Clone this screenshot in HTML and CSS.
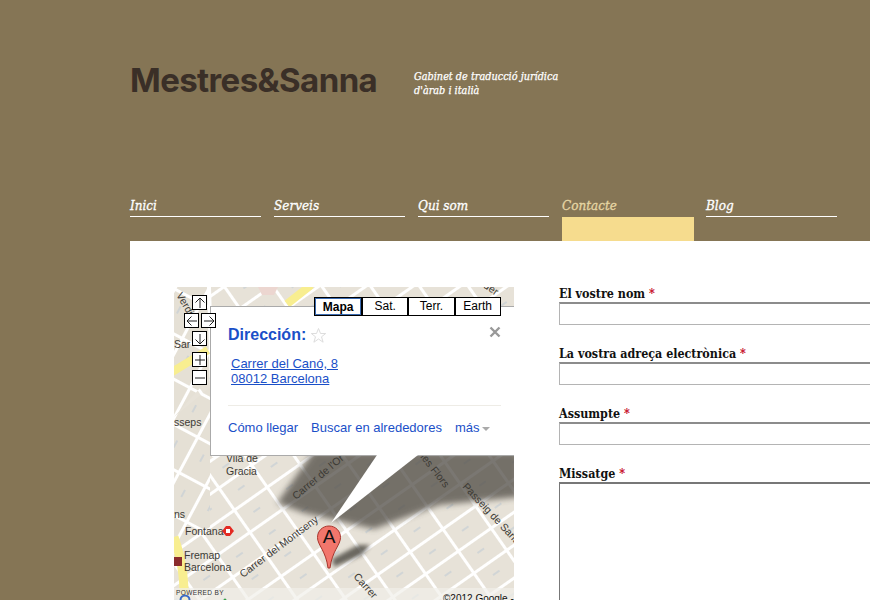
FILE: index.html
```html
<!DOCTYPE html>
<html lang="ca">
<head>
<meta charset="utf-8">
<title>Mestres&amp;Sanna</title>
<link rel="stylesheet" href="styles.css">
</head>
<body>
<header class="site-header">
  <h1 class="logo">Mestres&amp;Sanna</h1>
  <p class="tagline">Gabinet de traducció jurídica<br>d'àrab i italià</p>
</header>
<nav class="nav">
  <a class="nav-item" href="#">Inici</a>
  <a class="nav-item" href="#">Serveis</a>
  <a class="nav-item" href="#">Qui som</a>
  <a class="nav-item active" href="#">Contacte</a>
  <a class="nav-item" href="#">Blog</a>
</nav>
<main class="panel">
  <div class="map">
    <svg class="map-bg" width="340" height="320" viewBox="0 0 340 320">
      <defs>
        <pattern id="blocksA" width="40" height="27" patternUnits="userSpaceOnUse" patternTransform="rotate(-35)">
          <rect width="40" height="27" fill="#e7e2d8"/>
          <path d="M0 1.500H40M1.500 0V27" stroke="#fff" stroke-width="3"/>
          <path d="M16 14h8" stroke="#c3cdd6" stroke-width="1.200"/>
        </pattern>
        <pattern id="blocksB" width="30" height="40" patternUnits="userSpaceOnUse" patternTransform="rotate(28)">
          <rect width="30" height="40" fill="#e5e0d5"/>
          <path d="M0 1.500H30M1.500 0V40" stroke="#fff" stroke-width="3"/>
          <path d="M15 14v8" stroke="#c3cdd6" stroke-width="1.200"/>
        </pattern>
        <filter id="blur6" x="-20%" y="-20%" width="140%" height="140%"><feGaussianBlur stdDeviation="3"/></filter>
        <filter id="blur3" x="-20%" y="-20%" width="140%" height="140%"><feGaussianBlur stdDeviation="2"/></filter>
      </defs>
      <rect width="340" height="320" fill="url(#blocksA)"/>
      <path d="M0 0H36V90L0 130Z M0 130L36 100V240L0 260Z" fill="url(#blocksB)"/>
      <path d="M35 0L40 170" stroke="#fff" stroke-width="4" fill="none"/>
      <path d="M84 0H104L100 8H88Z" fill="#ecd6d0"/>
      <path d="M-2 85L34 63" stroke="#f8ee90" stroke-width="8" fill="none"/>
      <path d="M113 17L137 -2" stroke="#f8ee90" stroke-width="8" fill="none"/>
      <path d="M0 250C6 268 11 285 10 320" stroke="#f8ee90" stroke-width="9" fill="none"/>
      <rect x="0" y="270" width="8" height="9" fill="#8a2c2c"/>
      <path d="M103 216L139 165H345V210L265 218L200 242L130 226Z" fill="#4e4a42" opacity=".74" filter="url(#blur6)"/>
      <path d="M158 272L184 258H196L188 268L160 280Z" fill="#4a4740" opacity=".8" filter="url(#blur3)"/>
      <rect y="301" width="340" height="19" fill="#f1efe9" opacity=".7"/>
      <g class="map-label">
        <text x="52" y="175">Vila de</text>
        <text x="52" y="188">Gracia</text>
        <text x="0" y="139">sseps</text>
        <text x="11" y="248">Fontana</text>
        <text x="10" y="272">Fremap</text>
        <text x="10" y="284">Barcelona</text>
        <text x="0" y="61">Sar</text>
        <text x="0" y="231">ns</text>
        <text transform="translate(2 8) rotate(60)">Verdi</text>
        <text transform="translate(306 -2) rotate(35)">rder</text>
        <text transform="translate(122 213) rotate(-40)">Carrer de l'Or</text>
        <text transform="translate(69 291) rotate(-37)">Carrer del Montseny</text>
        <text transform="translate(246 170) rotate(52)">les Flors</text>
        <text transform="translate(288 200) rotate(47)">Passeig de Sant</text>
        <text transform="translate(179 290) rotate(48)">Carrer</text>
      </g>
      <path d="M48 244l4-5h4l4 5-4 5h-4Z" fill="#e32a22"/>
      <path d="M52 242h4v4h-4Z" fill="#fff"/>
      <circle cx="11" cy="313" r="4.500" fill="none" stroke="#3a6cc8" stroke-width="2"/>
      <circle cx="51" cy="313" r="1.500" fill="#3aa14a"/>
      <text class="map-powered" x="2" y="308">POWERED BY</text>
      <text class="map-copy" x="269" y="315">©2012 Google -</text>
    </svg>

    <div class="info">
      <div class="info-head">
        <span class="info-title">Dirección:</span>
        <svg class="star" width="17" height="17" viewBox="0 0 17 17"><path d="M8.500 1.500l2 5h5.200l-4.200 3.300 1.600 5.400-4.600-3.200-4.600 3.200 1.600-5.400L1.300 6.500h5.200Z"/></svg>
        <svg class="close" width="12" height="12" viewBox="0 0 12 12"><path d="M1.500 1.500l9 9M10.500 1.500l-9 9"/></svg>
      </div>
      <a class="info-addr" href="#">Carrer del Canó, 8<br>08012 Barcelona</a>
      <div class="info-links">
        <a href="#">Cómo llegar</a>
        <a href="#">Buscar en alrededores</a>
        <a href="#">más<span class="caret"></span></a>
      </div>
    </div>
    <svg class="tail" width="100" height="72" viewBox="0 0 100 72"><path d="M54 0H95L8 68Z"/></svg>

    <div class="map-pan">
      <button class="ctl ctl-up" aria-label="up"><svg width="12" height="12" viewBox="0 0 12 12"><path d="M6 11V1M1.500 5.500L6 1l4.500 4.500"/></svg></button>
      <button class="ctl ctl-left" aria-label="left"><svg width="12" height="12" viewBox="0 0 12 12"><path d="M11 6H1M5.500 1.500L1 6l4.500 4.500"/></svg></button>
      <button class="ctl ctl-right" aria-label="right"><svg width="12" height="12" viewBox="0 0 12 12"><path d="M1 6H11M6.500 1.500L11 6l-4.500 4.500"/></svg></button>
      <button class="ctl ctl-down" aria-label="down"><svg width="12" height="12" viewBox="0 0 12 12"><path d="M6 1V11M1.500 6.500L6 11l4.500-4.500"/></svg></button>
      <button class="ctl ctl-plus" aria-label="zoom in"><svg width="12" height="12" viewBox="0 0 12 12"><path d="M6 1V11M1 6H11"/></svg></button>
      <button class="ctl ctl-minus" aria-label="zoom out"><svg width="12" height="12" viewBox="0 0 12 12"><path d="M1 6H11"/></svg></button>
    </div>

    <div class="map-types">
      <span class="type type-on">Mapa</span>
      <span class="type">Sat.</span>
      <span class="type">Terr.</span>
      <span class="type">Earth</span>
    </div>

    <svg class="pin" width="26" height="44" viewBox="0 0 26 44">
      <path d="M13 1C6.500 1 1.500 6 1.500 12.500C1.500 20 10 26 12 43H14C16 26 24.500 20 24.500 12.500C24.500 6 19.500 1 13 1Z"/>
      <text x="13" y="18">A</text>
    </svg>
  </div>

  <form class="form">
    <div class="field"><label>El vostre nom <em>*</em></label><input type="text"></div>
    <div class="field"><label>La vostra adreça electrònica <em>*</em></label><input type="text"></div>
    <div class="field"><label>Assumpte <em>*</em></label><input type="text"></div>
    <div class="field"><label>Missatge <em>*</em></label><textarea></textarea></div>
  </form>
</main>
</body>
</html>
```
FILE: styles.css
```css
html, body { margin: 0; padding: 0; height: 600px; overflow: hidden; }
body { background: #857555; font-family: "Liberation Sans", Arial, sans-serif; }

.site-header { display: flex; align-items: flex-start; height: 197px; padding-left: 130px; box-sizing: border-box; }
.logo { margin: 60px 0 0; font: 700 33px/40px Inter, "Liberation Sans", sans-serif; letter-spacing: -.6px; color: #3a2f27; width: 284px; }
.tagline { margin: 70px 0 0; font: italic 400 10.800px/13.500px "DejaVu Serif Condensed", "DejaVu Serif", serif; -webkit-text-stroke: .25px #fff; color: #fff; }

.nav { display: flex; gap: 13px; padding-left: 130px; height: 44px; }
.nav-item { position: relative; box-sizing: border-box; display: block; width: 131px; height: 20px; border-bottom: 1px solid #fff; font: italic 400 13.400px/18px "DejaVu Serif Condensed", "DejaVu Serif", serif; -webkit-text-stroke: .3px currentColor; color: #fff; text-decoration: none; }
.nav-item.active { height: 44px; border-bottom: 0; color: #e6d6a4; width: 132px; margin-right: -1px; }
.nav-item.active::after { content: ""; position: absolute; left: 0; right: 0; top: 20px; height: 24px; background: #f6dc8e; }

.panel { display: flex; align-items: flex-start; gap: 45px; margin-left: 130px; height: 359px; padding: 46px 0 0 44px; background: #fff; box-sizing: border-box; width: 740px; overflow: hidden; }

.map { position: relative; flex: none; width: 340px; height: 320px; overflow: hidden; }
.map-bg { display: block; }
.map-label text { font: 10.500px "Liberation Sans", sans-serif; fill: #3c3a35; }
.map-powered { font: 6.500px "Liberation Sans", sans-serif; letter-spacing: .4px; fill: #333; }
.map-copy { font: 10px "Liberation Sans", sans-serif; fill: #111; }

.ctl { position: absolute; display: flex; align-items: center; justify-content: center; width: 15px; height: 15px; padding: 0; background: #fff; border: 1px solid #000; box-sizing: border-box; }
.ctl svg { fill: none; stroke: #222; stroke-width: 1; }
.ctl-up { left: 18px; top: 8px; }
.ctl-left { left: 10px; top: 26px; }
.ctl-right { left: 27px; top: 26px; }
.ctl-down { left: 18px; top: 44px; }
.ctl-plus { left: 18px; top: 65px; }
.ctl-minus { left: 18px; top: 83px; }

.info { position: absolute; left: 36px; top: 19px; width: 304px; height: 150px; padding: 18px 13px 0 17px; box-sizing: border-box; background: #fff; border: 1px solid #aaa; border-right: 0; }
.info-head { display: flex; align-items: center; height: 20px; }
.info-title { font-weight: 700; font-size: 16px; color: #1a4fc8; }
.star { margin-left: 4px; fill: #fff; stroke: #ddd; stroke-width: 1; }
.close { margin-left: auto; margin-top: -7px; fill: none; stroke: #999; stroke-width: 2.400; }
.info-addr { display: block; margin: 11px 0 0 3px; padding-bottom: 19px; font-size: 13px; line-height: 15px; color: #1a4fc8; }
.info-links { display: flex; gap: 13px; padding-top: 14px; border-top: 1px solid #eeece6; font-size: 13px; line-height: 15px; }
.info-links a { color: #1a4fc8; text-decoration: none; }
.caret { display: inline-block; margin-left: 3px; border: 4px solid transparent; border-top: 4px solid #aaa; border-bottom: 0; vertical-align: 1px; }

.tail { position: absolute; left: 149px; top: 168px; fill: #fff; }

.map-types { position: absolute; left: 140px; top: 10px; display: flex; border: 1px solid #000; background: #fff; }
.type { box-sizing: border-box; width: 46.200px; height: 17px; border-left: 2px solid #000; font-size: 12px; line-height: 16px; text-align: center; color: #000; }
.type-on { border: 1px solid #3a6ab0; font-weight: 700; }

.pin { position: absolute; left: 142px; top: 238px; fill: #f2766c; stroke: #a8352c; stroke-width: 1; }
.pin text { font: 19px "Liberation Sans", sans-serif; fill: #111; stroke: none; text-anchor: middle; }

.form { flex: none; width: 340px; }
.field { height: 60px; }
.field label { display: block; height: 15px; font: 700 12.400px/14px "DejaVu Serif Condensed", "DejaVu Serif", serif; color: #111; }
.field em { font-style: normal; color: #c4001a; }
.field input, .field textarea { display: block; box-sizing: border-box; width: 340px; height: 23px; margin: 0; padding: 0; background: #fff; border: 1px solid #b4b4b4; border-top: 2px solid #8c8c8c; border-radius: 0; }
.field textarea { height: 200px; border-color: #777; resize: none; }
```
